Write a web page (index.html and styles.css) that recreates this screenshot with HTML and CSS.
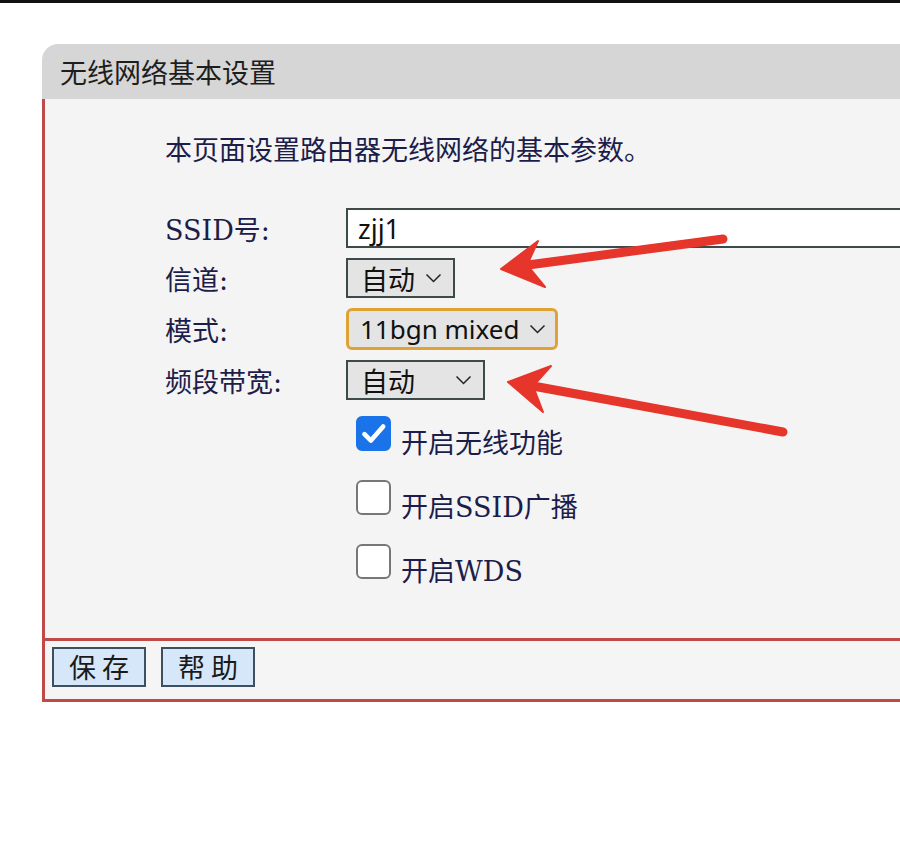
FILE: index.html
```html
<!DOCTYPE html>
<html lang="zh-CN">
<head>
    <meta charset="UTF-8">
    <meta name="viewport" content="width=device-width, initial-scale=1.0">
    <title>无线网络基本设置</title>
    <link rel="stylesheet" href="styles.css">
</head>
<body>

<div class="topbar"></div>

<div class="panel">
    <div class="panel-head">无线网络基本设置</div>

    <div class="panel-body">
        <p class="desc">本页面设置路由器无线网络的基本参数。</p>

        <div class="form">
            <div class="row">
                <span class="label">SSID号:</span>
                <input class="text-input" type="text" value="zjj1">
            </div>
            <div class="row">
                <span class="label">信道:</span>
                <div class="select">
                    <span>自动</span>
                    <svg class="chevron" viewBox="0 0 16 10"><path d="M1 1.5 L8 8.5 L15 1.5"/></svg>
                </div>
            </div>
            <div class="row">
                <span class="label">模式:</span>
                <div class="select focused">
                    <span>11bgn mixed</span>
                    <svg class="chevron" viewBox="0 0 16 10"><path d="M1 1.5 L8 8.5 L15 1.5"/></svg>
                </div>
            </div>
            <div class="row">
                <span class="label">频段带宽:</span>
                <div class="select wide">
                    <span>自动</span>
                    <svg class="chevron" viewBox="0 0 16 10"><path d="M1 1.5 L8 8.5 L15 1.5"/></svg>
                </div>
            </div>
        </div>

        <div class="checks">
            <label class="check">
                <span class="box checked">
                    <svg viewBox="0 0 24 24"><path d="M5 12.5 L10 17.5 L19.5 6.5"/></svg>
                </span>
                <span class="check-text">开启无线功能</span>
            </label>
            <label class="check">
                <span class="box"></span>
                <span class="check-text">开启SSID广播</span>
            </label>
            <label class="check">
                <span class="box"></span>
                <span class="check-text">开启WDS</span>
            </label>
        </div>
    </div>

    <div class="panel-foot">
        <button class="btn">保 存</button>
        <button class="btn">帮 助</button>
    </div>
</div>

<!-- annotation arrows drawn over the screenshot -->
<svg class="arrows" viewBox="0 0 900 853">
    <line x1="723" y1="239" x2="528" y2="265"/>
    <polygon points="501,269 538,241 527,265 545,287"/>
    <line x1="783" y1="432" x2="533" y2="386"/>
    <polygon points="508,382 551,366 533,386 543,412"/>
</svg>

</body>
</html>
```

FILE: styles.css
```css
body {
    margin: 0;
    background-color: #fff;
    font-family: "Noto Sans CJK SC", "Noto Sans", sans-serif;
    overflow: hidden;
    height: 853px;
    position: relative;
}
.topbar {
    height: 3px;
    background-color: #111;
}
.panel {
    margin: 41px 0 0 42px;
    width: 900px;
}
.panel-head {
    height: 55px;
    line-height: 55px;
    padding-left: 18px;
    background-color: #d6d6d6;
    border-top-left-radius: 16px;
    font-size: 27px;
    color: #1e1e1e;
}
.panel-body {
    height: 539px;
    background-color: #f4f4f4;
    border-left: 3px solid #bf4b48;
    padding-left: 120px;
    box-sizing: border-box;
    padding-top: 30px;
}
.desc {
    margin: 0;
    font-size: 27px;
    line-height: 40px;
    color: #1d1d4a;
}
.form {
    margin-top: 39px;
}
.row {
    display: flex;
    align-items: center;
    margin-bottom: 10px;
}
.label {
    width: 181px;
    flex-shrink: 0;
    font-family: "DejaVu Serif", "Noto Sans CJK SC", serif;
    font-size: 27px;
    color: #1d1d4a;
}
.text-input {
    width: 600px;
    height: 40px;
    box-sizing: border-box;
    border: 2px solid #3c4a4a;
    background-color: #fff;
    padding: 0 10px;
    font-family: "Noto Sans", "Noto Sans CJK SC", sans-serif;
    font-size: 27px;
    color: #111;
    outline: none;
}
.select {
    display: flex;
    align-items: center;
    height: 40px;
    box-sizing: border-box;
    border: 2px solid #3c4a4a;
    background-color: #e4e4e4;
    padding: 0 11px 0 13px;
    font-family: "Noto Sans", "Noto Sans CJK SC", sans-serif;
    font-size: 27px;
    color: #111;
}
.select span {
    margin-right: 10px;
}
.select.focused {
    height: 42px;
    border: 3px solid #dfa333;
    border-radius: 6px;
    padding-left: 11px;
    padding-right: 9px;
    font-size: 26px;
}
.select.wide span {
    margin-right: 40px;
}
.chevron {
    width: 17px;
    height: 10px;
    flex-shrink: 0;
    fill: none;
    stroke: #222;
    stroke-width: 1.5;
}
.checks {
    margin-top: 16px;
    padding-left: 191px;
}
.check {
    display: flex;
    align-items: flex-start;
    height: 35px;
    margin-bottom: 29px;
}
.box {
    width: 35px;
    height: 35px;
    box-sizing: border-box;
    border: 2px solid #777;
    border-radius: 6px;
    background-color: #fff;
    flex-shrink: 0;
}
.box.checked {
    background-color: #1a73e8;
    border-color: #1a73e8;
}
.box svg {
    width: 31px;
    height: 31px;
    fill: none;
    stroke: #fff;
    stroke-width: 3.6;
    stroke-linecap: round;
    stroke-linejoin: round;
}
.check-text {
    margin-left: 10px;
    margin-top: 11px;
    font-family: "DejaVu Serif", "Noto Sans CJK SC", serif;
    font-size: 27px;
    line-height: 34px;
    color: #1d1d4a;
}
.panel-foot {
    height: 64px;
    box-sizing: border-box;
    border-top: 3px solid #bf4b48;
    border-bottom: 3px solid #bf4b48;
    border-left: 3px solid #bf4b48;
    background-color: #f5f5f5;
    padding: 6px 7px;
    display: flex;
    gap: 15px;
}
.btn {
    width: 94px;
    height: 40px;
    border: 2px solid #3c5060;
    background-color: #d6e7f9;
    font-family: "Noto Sans CJK SC", sans-serif;
    font-size: 27px;
    color: #1a1a1a;
    padding: 0;
    line-height: 36px;
}
.arrows {
    position: absolute;
    top: 0;
    left: 0;
    width: 900px;
    height: 853px;
    pointer-events: none;
}
.arrows line {
    stroke: #e6352b;
    stroke-width: 9;
    stroke-linecap: round;
}
.arrows polygon {
    fill: #e6352b;
    stroke: #e6352b;
    stroke-width: 2;
    stroke-linejoin: round;
}
```
